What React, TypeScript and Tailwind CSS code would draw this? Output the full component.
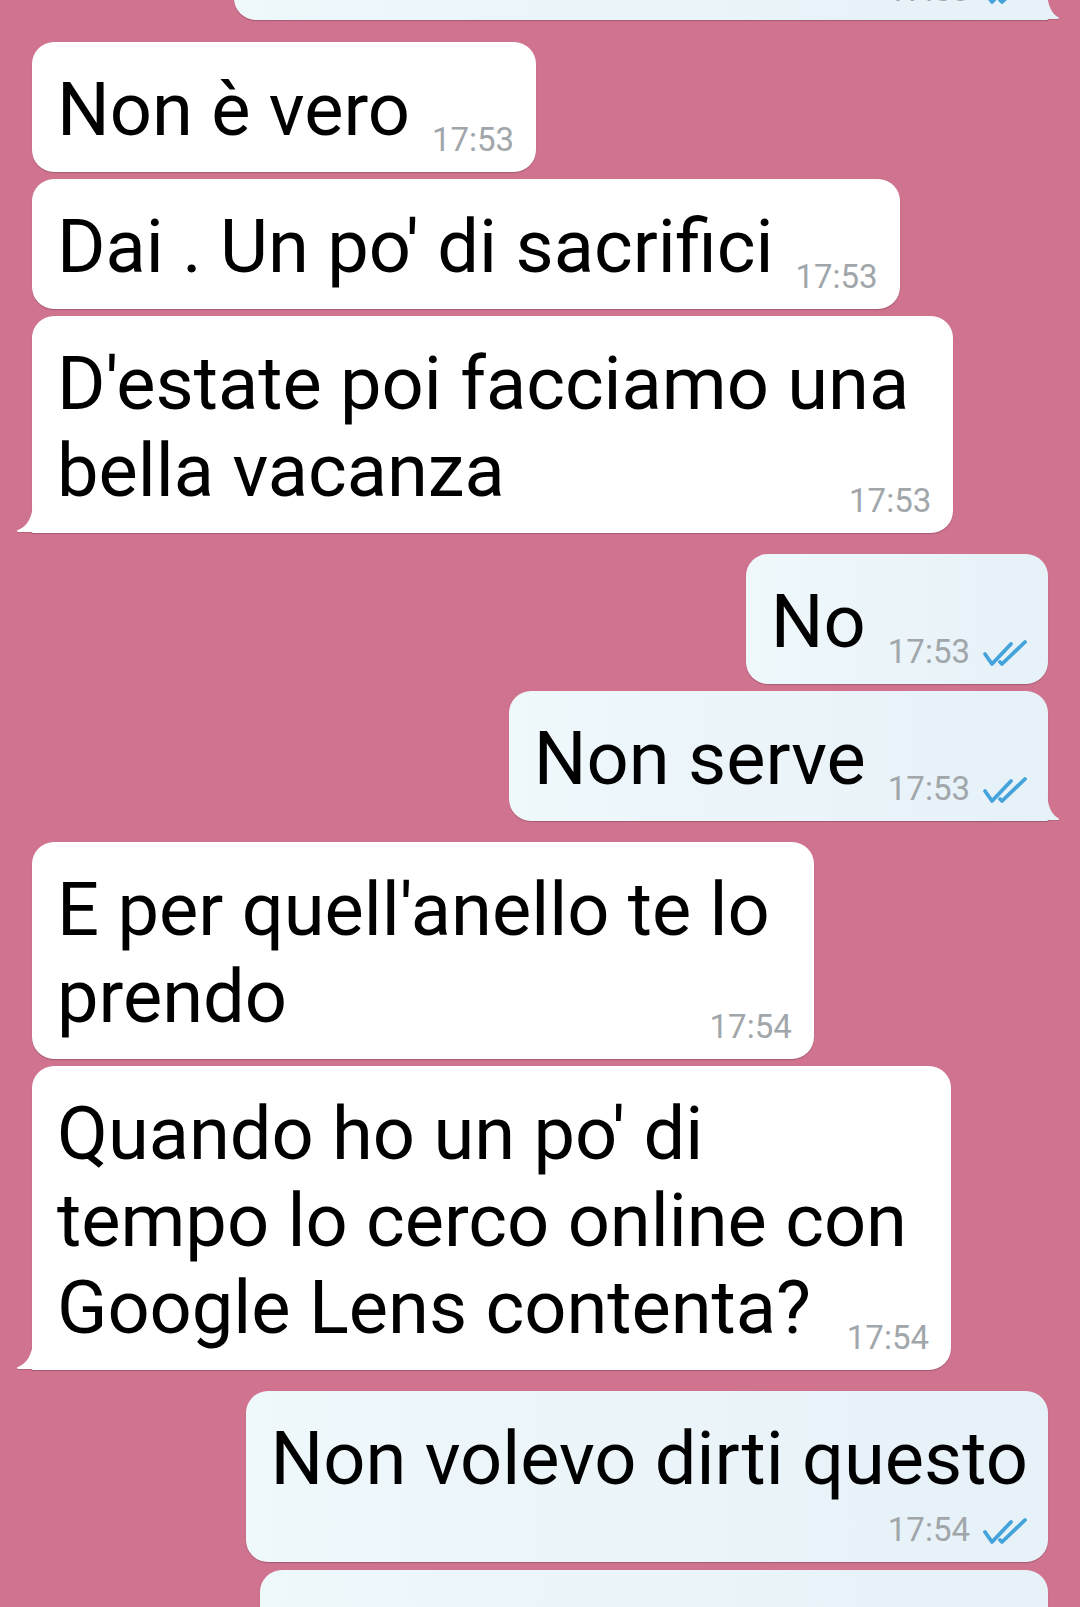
import React from "react";

type Msg = {
  id: number;
  side: "in" | "out";
  lines: string[];
  time: string;
  tail?: boolean;
  metaBelow?: boolean;
  gap: "first" | "group" | "same";
};

const messages: Msg[] = [
  { id: 1, side: "in", lines: ["Non è vero"], time: "17:53", gap: "first" },
  { id: 2, side: "in", lines: ["Dai . Un po' di sacrifici"], time: "17:53", gap: "same" },
  { id: 3, side: "in", lines: ["D'estate poi facciamo una", "bella vacanza"], time: "17:53", tail: true, gap: "same" },
  { id: 4, side: "out", lines: ["No"], time: "17:53", gap: "group" },
  { id: 5, side: "out", lines: ["Non serve"], time: "17:53", tail: true, gap: "same" },
  { id: 6, side: "in", lines: ["E per quell'anello te lo", "prendo"], time: "17:54", gap: "group" },
  { id: 7, side: "in", lines: ["Quando ho un po' di", "tempo lo cerco online con", "Google Lens contenta?"], time: "17:54", tail: true, gap: "same" },
  { id: 8, side: "out", lines: ["Non volevo dirti questo"], time: "17:54", metaBelow: true, gap: "group" },
];

const gapClass = { first: "mt-[22px]", group: "mt-[21px]", same: "mt-[7px]" };

const Checks = () => (
  <svg width="46" height="28" viewBox="0 0 46 28" fill="none" stroke="#43a3da" strokeWidth="3.8" strokeLinecap="round" strokeLinejoin="round">
    <path d="M3 15 L10 25 L29 5" />
    <path d="M18 23 L20 25 L43 3" />
  </svg>
);

const Tail = ({ side }: { side: "in" | "out" }) => {
  if (side === "in") {
    return (
      <svg className="absolute -left-[16px] bottom-0" width="17" height="31" viewBox="0 0 17 31">
        <path d="M17 1 C17 17 10 26 2 29 C0 30 1 31 3 31 L17 31 Z" fill="rgba(0,0,0,0.12)" />
        <path d="M17 0 C17 16 10 25 2 28 C0 29 1 30 3 30 L17 30 Z" fill="#ffffff" />
      </svg>
    );
  }
  return (
    <svg className="absolute -right-[12px] bottom-0" width="13" height="31" viewBox="0 0 13 31">
      <path d="M0 1 C0 17 5 26 11 29 C13 30 12 31 10 31 L0 31 Z" fill="rgba(0,0,0,0.12)" />
      <path d="M0 0 C0 16 5 25 11 28 C13 29 12 30 10 30 L0 30 Z" fill="#e6f1f8" />
    </svg>
  );
};

const Meta = ({ m, className = "" }: { m: Msg; className?: string }) => (
  <span className={`flex items-end gap-[12px] text-[33px] leading-none text-[#a1a6aa] ${className}`}>
    <span>{m.time}</span>
    {m.side === "out" && (
      <span className="mb-[1px]">
        <Checks />
      </span>
    )}
  </span>
);

const Bubble = ({ m }: { m: Msg }) => {
  const out = m.side === "out";
  const bg = out ? "bg-linear-to-r from-[#eff8fb] to-[#e6f1f8]" : "bg-white";
  const corner = m.tail ? (out ? "rounded-br-none" : "rounded-bl-none") : "";
  const pad = out ? "pl-[25px] pr-[20px]" : "pl-[25px] pr-[22px]";
  const last = m.lines[m.lines.length - 1];
  const rest = m.lines.slice(0, -1);

  return (
    <div className={`flex ${out ? "justify-end" : "justify-start"} ${gapClass[m.gap]}`}>
      <div className={`relative rounded-[22px] ${corner} ${bg} ${pad} pt-[24px] pb-[19px] shadow-[0_1px_1px_rgba(0,0,0,0.22)]`}>
        {m.metaBelow ? (
          <div className="flex flex-col">
            {m.lines.map((l) => (
              <span key={l} className="whitespace-nowrap">{l}</span>
            ))}
            <div className="flex justify-end mt-[11px] -mb-[3px]">
              <Meta m={m} />
            </div>
          </div>
        ) : (
          <div className="flex flex-col">
            {rest.map((l) => (
              <span key={l} className="whitespace-nowrap pr-[22px]">{l}</span>
            ))}
            <div className="flex items-end justify-between">
              <span className="whitespace-nowrap">{last}</span>
              <Meta m={m} className="ml-[22px] -mb-[3px]" />
            </div>
          </div>
        )}
        {m.tail && <Tail side={m.side} />}
      </div>
    </div>
  );
};

export default function App() {
  return (
    <div
      className="w-[1080px] h-[1607px] overflow-hidden bg-[#d0738f] px-[32px] text-black text-[74px] leading-[87px]"
      style={{ fontFamily: "Roboto, 'Noto Sans', sans-serif" }}
    >
      {/* previous message, mostly scrolled out of view */}
      <div className="flex justify-end">
        <div className="relative -mt-[110px] h-[130px] w-[814px] rounded-[22px] rounded-br-none bg-linear-to-r from-[#eff8fb] to-[#e6f1f8] pr-[20px] pb-[14px] flex flex-col justify-end items-end shadow-[0_1px_1px_rgba(0,0,0,0.22)]">
          <Meta m={{ id: 0, side: "out", lines: [], time: "17:53", gap: "same" }} />
          <Tail side="out" />
        </div>
      </div>

      {messages.map((m) => (
        <Bubble key={m.id} m={m} />
      ))}

      {/* next message, cut off at the bottom */}
      <div className="flex justify-end mt-[8px]">
        <div className="h-[160px] w-[788px] rounded-[22px] bg-linear-to-r from-[#eff8fb] to-[#e6f1f8] shadow-[0_1px_1px_rgba(0,0,0,0.22)]" />
      </div>
    </div>
  );
}
